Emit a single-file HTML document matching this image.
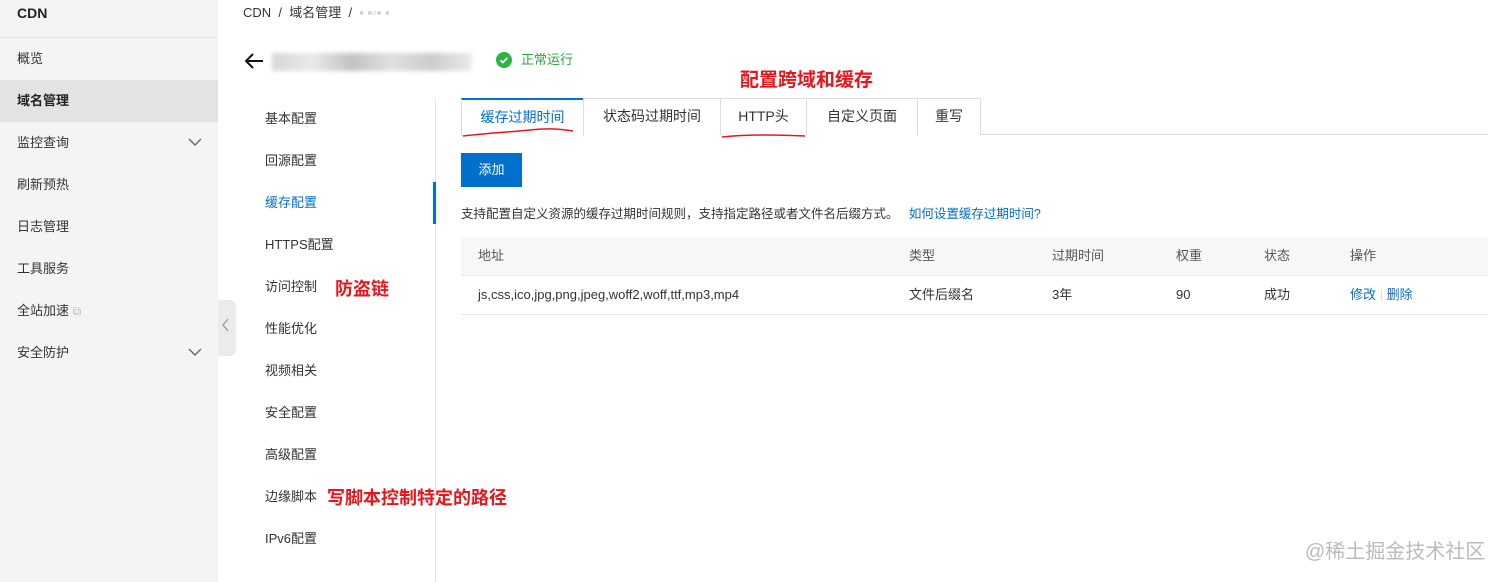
<!DOCTYPE html>
<html><head><meta charset="utf-8"><style>
*{margin:0;padding:0;box-sizing:border-box}
body{width:1512px;height:582px;overflow:hidden;background:#fff;font-family:"Liberation Sans","Noto Sans CJK SC",sans-serif;font-size:13px;line-height:16px;color:#333;position:relative}
.a{position:absolute;white-space:nowrap}
.side{position:absolute;left:0;top:0;width:218px;height:582px;background:#f4f4f4}
.mi{position:absolute;left:17px;font-size:13px;color:#333}
.sn{position:absolute;left:265px;font-size:13px;color:#333}
.red{color:#e8161c;font-weight:bold;position:absolute;white-space:nowrap;line-height:1}
.tab{position:absolute;top:98px;height:37px;border:1px solid #ddd;border-bottom:none;background:#fff;text-align:center;line-height:34px;font-size:14px;color:#333}
.th{position:absolute;top:248px;color:#555}
.td{position:absolute;top:287px;color:#333}
</style></head><body>
<div class="side">
<div class="a" style="left:17px;top:5px;font-size:14px;font-weight:bold;color:#222">CDN</div>
<div style="position:absolute;left:0;top:37px;width:218px;height:1px;background:#e2e2e2"></div>
<div style="position:absolute;left:0;top:80px;width:218px;height:42px;background:#e3e3e3"></div>
<div class="mi" style="top:51px">概览</div>
<div class="mi" style="top:93px;font-weight:bold;color:#222">域名管理</div>
<div class="mi" style="top:135px">监控查询</div>
<div class="mi" style="top:177px">刷新预热</div>
<div class="mi" style="top:219px">日志管理</div>
<div class="mi" style="top:261px">工具服务</div>
<div class="mi" style="top:303px">全站加速 <span style="color:#bbb;font-size:12px">⧉</span></div>
<div class="mi" style="top:345px">安全防护</div>
<svg class="a" style="left:188px;top:137px" width="14" height="10"><path d="M1 2l6 6 6-6" fill="none" stroke="#666" stroke-width="1.4"/></svg>
<svg class="a" style="left:188px;top:347px" width="14" height="10"><path d="M1 2l6 6 6-6" fill="none" stroke="#666" stroke-width="1.4"/></svg>
</div>
<div class="a" style="left:218px;top:300px;width:18px;height:56px;background:#ebebeb;border-radius:0 6px 6px 0"></div>
<svg class="a" style="left:221px;top:318px" width="10" height="14"><path d="M7 1L2 7l5 6" fill="none" stroke="#999" stroke-width="1.3"/></svg>

<div class="a" style="left:243px;top:5px;font-size:13px;color:#333">CDN &nbsp;/&nbsp; 域名管理 &nbsp;/&nbsp; <span style="color:#ccc">▪ ▪▫▪ ▪</span></div>
<svg class="a" style="left:243px;top:52px" width="22" height="18"><path d="M20 9H3M10 2L3 9l7 7" fill="none" stroke="#111" stroke-width="2"/></svg>
<div class="a" style="left:272px;top:53px;width:200px;height:18px;background:linear-gradient(90deg,#bbb,#ddd 20%,#999 40%,#ccc 60%,#aaa 80%,#ddd);opacity:.6;filter:blur(2px)"></div>
<svg class="a" style="left:496px;top:52px" width="16" height="16"><circle cx="8" cy="8" r="8" fill="#2fb344"/><path d="M4.5 8.2l2.3 2.3 4.5-4.5" fill="none" stroke="#fff" stroke-width="1.8"/></svg>
<div class="a" style="left:521px;top:52px;color:#2fa33f;font-size:13px">正常运行</div>

<div class="sn" style="top:111px">基本配置</div>
<div class="sn" style="top:153px">回源配置</div>
<div class="sn" style="top:195px;color:#0070cc">缓存配置</div>
<div class="sn" style="top:237px">HTTPS配置</div>
<div class="sn" style="top:279px">访问控制</div>
<div class="sn" style="top:321px">性能优化</div>
<div class="sn" style="top:363px">视频相关</div>
<div class="sn" style="top:405px">安全配置</div>
<div class="sn" style="top:447px">高级配置</div>
<div class="sn" style="top:489px">边缘脚本</div>
<div class="sn" style="top:531px">IPv6配置</div>
<div class="a" style="left:435px;top:98px;width:1px;height:484px;background:#e5e5e5"></div>
<div class="a" style="left:433px;top:182px;width:3px;height:42px;background:#0070cc"></div>
<div class="red" style="left:335px;top:280px;font-size:18px">防盗链</div>
<div class="red" style="left:327px;top:489px;font-size:18px">写脚本控制特定的路径</div>
<div class="red" style="left:740px;top:71px;font-size:19px">配置跨域和缓存</div>

<div class="a" style="left:461px;top:134px;width:1027px;height:1px;background:#ddd"></div>
<div class="tab" style="left:461px;width:123px;border-top:2px solid #0070cc;color:#0070cc;height:38px">缓存过期时间</div>
<div class="tab" style="left:583px;width:138px">状态码过期时间</div>
<div class="tab" style="left:720px;width:87px">HTTP头</div>
<div class="tab" style="left:806px;width:112px">自定义页面</div>
<div class="tab" style="left:917px;width:64px">重写</div>
<svg class="a" style="left:460px;top:125px" width="360" height="16"><path d="M3 11C30 8 50 7 70 5S100 4 113 6" fill="none" stroke="#e8161c" stroke-width="1.5"/><path d="M262 12C290 9 320 10 345 11" fill="none" stroke="#e8161c" stroke-width="1.5"/></svg>

<div class="a" style="left:461px;top:153px;width:61px;height:34px;background:#0070cc;color:#fff;text-align:center;line-height:34px">添加</div>
<div class="a" style="left:461px;top:206px;font-size:12.5px;color:#333">支持配置自定义资源的缓存过期时间规则，支持指定路径或者文件名后缀方式。 &nbsp; <span style="color:#0070cc">如何设置缓存过期时间?</span></div>

<div class="a" style="left:461px;top:237px;width:1027px;height:39px;background:#f7f7f7;border-bottom:1px solid #e8e8e8"></div>
<div class="a" style="left:461px;top:314px;width:1027px;height:1px;background:#e8e8e8"></div>
<div class="th" style="left:478px">地址</div>
<div class="th" style="left:909px">类型</div>
<div class="th" style="left:1052px">过期时间</div>
<div class="th" style="left:1176px">权重</div>
<div class="th" style="left:1264px">状态</div>
<div class="th" style="left:1350px">操作</div>
<div class="td" style="left:478px">js,css,ico,jpg,png,jpeg,woff2,woff,ttf,mp3,mp4</div>
<div class="td" style="left:909px">文件后缀名</div>
<div class="td" style="left:1052px">3年</div>
<div class="td" style="left:1176px">90</div>
<div class="td" style="left:1264px">成功</div>
<div class="td" style="left:1350px;color:#0070cc">修改 <span style="color:#ddd">|</span> 删除</div>

<div class="a" style="left:1305px;top:541px;font-size:20px;line-height:22px;color:#bbb">@稀土掘金技术社区</div>
</body></html>
